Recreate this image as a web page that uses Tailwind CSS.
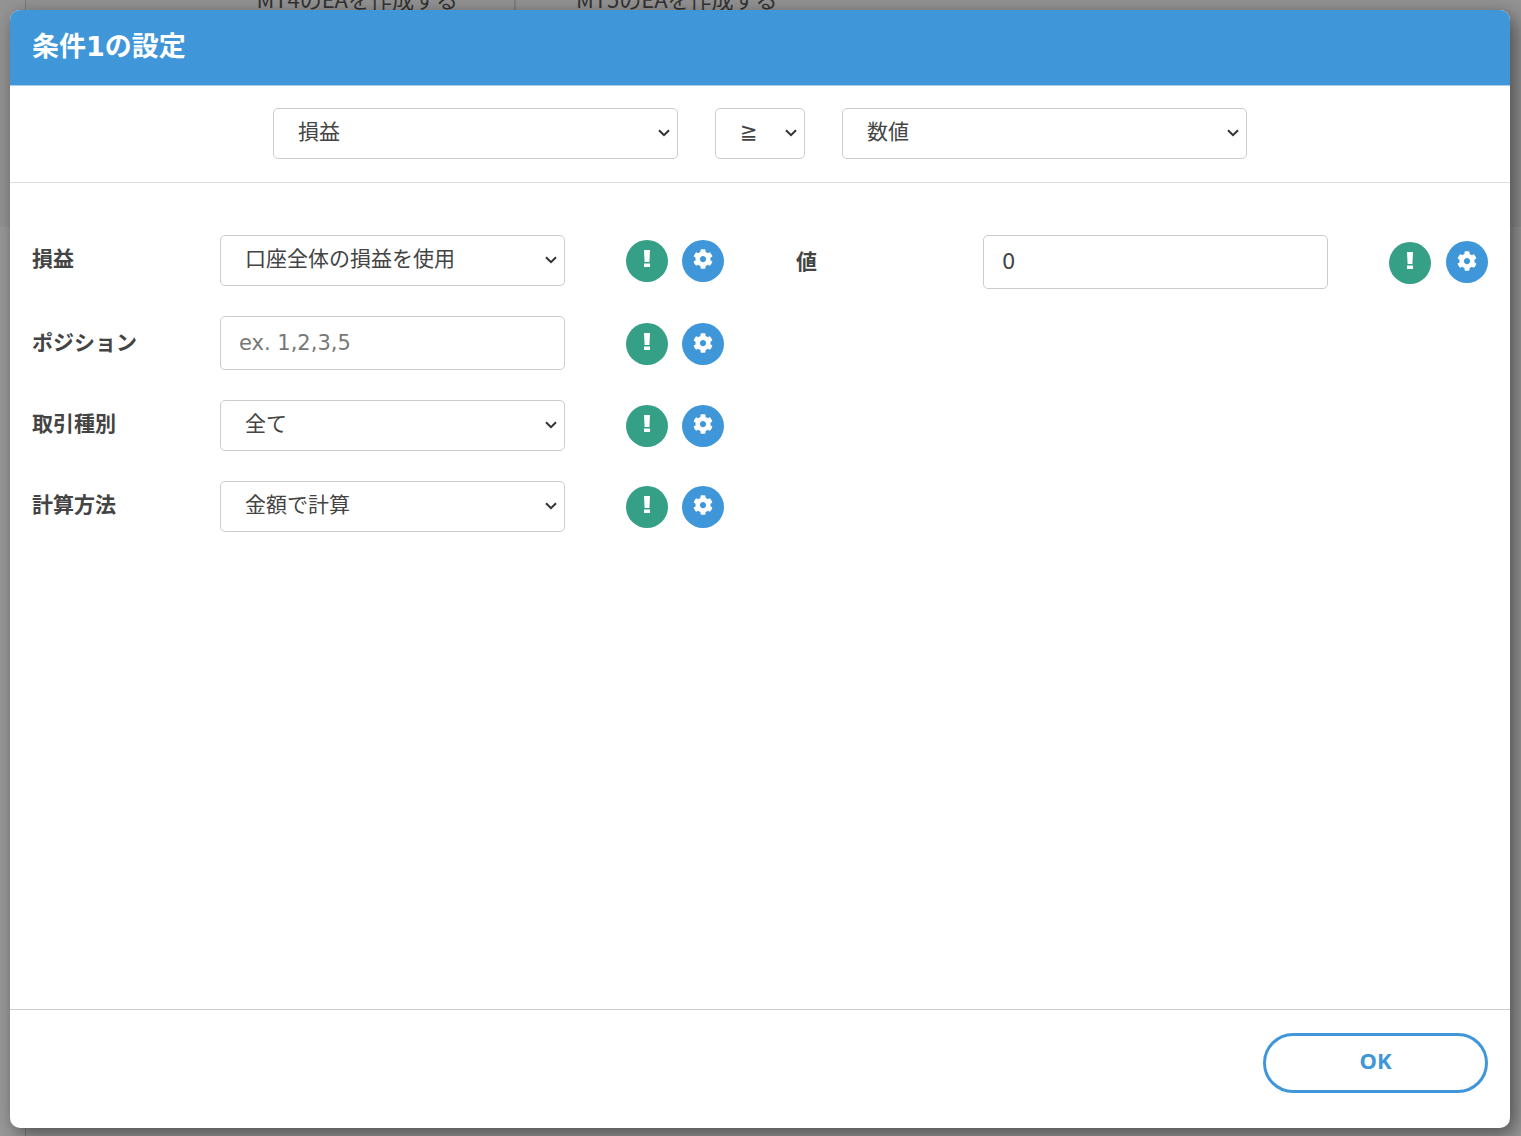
<!DOCTYPE html>
<html lang="ja">

<head>
    <meta charset="UTF-8">
    <meta name="viewport" content="width=device-width, initial-scale=1.0">
    <title>条件1の設定</title>
    <script src="https://cdn.jsdelivr.net/npm/@tailwindcss/browser@4"></script>
</head>

<body class="relative h-screen overflow-hidden bg-[#9a9a9a] font-['DejaVu_Sans','Noto_Sans_CJK_JP',sans-serif] text-[#444444]">

    <!-- Shared icons -->
    <svg class="hidden">
        <symbol id="chevron" viewBox="0 0 12 8"><path d="M1 1.2l5 5 5-5" fill="none" stroke="#333333" stroke-width="2"/></symbol>
        <symbol id="bang" viewBox="0 0 6 17"><path d="M0 0h6l-.6 12H.6z" fill="white"/><rect y="13.5" width="6" height="3.5" fill="white"/></symbol>
        <symbol id="cog" viewBox="0 0 512 512"><path fill="white" d="M487.4 315.7l-42.6-24.6c4.3-23.2 4.3-47 0-70.2l42.6-24.6c4.9-2.8 7.1-8.6 5.5-14-11.1-35.6-30-67.8-54.7-94.6-3.8-4.1-10-5.1-14.8-2.3L380.8 110c-17.9-15.4-38.5-27.3-60.8-35.1V25.8c0-5.6-3.9-10.5-9.4-11.7-36.7-8.2-74.3-7.8-109.2 0-5.5 1.2-9.4 6.1-9.4 11.7V75c-22.2 7.9-42.8 19.8-60.8 35.1L88.7 85.5c-4.9-2.8-11-1.9-14.8 2.3-24.7 26.7-43.6 58.9-54.7 94.6-1.7 5.4.6 11.2 5.5 14L67.3 221c-4.3 23.2-4.3 47 0 70.2l-42.6 24.6c-4.9 2.8-7.1 8.6-5.5 14 11.1 35.6 30 67.8 54.7 94.6 3.8 4.1 10 5.1 14.8 2.3l42.6-24.6c17.9 15.4 38.5 27.3 60.8 35.1v49.2c0 5.6 3.9 10.5 9.4 11.7 36.7 8.2 74.3 7.8 109.2 0 5.5-1.2 9.4-6.1 9.4-11.7v-49.2c22.2-7.9 42.8-19.8 60.8-35.1l42.6 24.6c4.9 2.8 11 1.9 14.8-2.3 24.7-26.7 43.6-58.9 54.7-94.6 1.5-5.5-.7-11.3-5.6-14.1zM256 336c-44.1 0-80-35.9-80-80s35.9-80 80-80 80 35.9 80 80-35.9 80-80 80z"/></symbol>
    </svg>

    <!-- Page behind the overlay -->
    <div class="absolute inset-x-0 top-0 h-[227px] bg-[#949494]"></div>
    <div class="absolute top-0 left-[25px] h-full border-l border-[#7c7c7c]"></div>
    <div class="absolute top-[-18px] left-[26px] flex h-[32px] font-['Noto_Sans_CJK_JP',sans-serif] text-[22px] text-[#333333]">
        <div class="w-[490px] border-r-2 border-[#808080] pr-[56px] text-right">MT4のEAを作成する</div>
        <div class="w-[322px] whitespace-nowrap pl-[60px]">MT5のEAを作成する</div>
    </div>

    <!-- Modal -->
    <div class="relative ml-[10px] mt-[10px] flex h-[1118px] w-[1500px] flex-col rounded-[10px] bg-white shadow-[5px_6px_20px_rgba(0,0,0,0.5)]">

        <!-- Header -->
        <div class="flex h-[76px] items-center rounded-t-[10px] border-b border-[#a9cfec] bg-[#3f96d9] px-[22px]">
            <h1 class="text-[27px] font-bold text-white">条件1の設定</h1>
        </div>

        <!-- Condition selects -->
        <div class="flex h-[97px] items-start justify-center gap-[37px] border-b border-[#dddddd] pt-[22px]">
            <div class="relative w-[405px]">
                <select class="h-[51px] w-full appearance-none rounded-[5px] border border-[#cccccc] bg-white pb-[2px] pl-[24px] text-[21px]"><option>損益</option></select>
                <svg class="pointer-events-none absolute right-[8px] top-[21px] h-[8px] w-[12px]"><use href="#chevron"/></svg>
            </div>
            <div class="relative w-[90px]">
                <select class="h-[51px] w-full appearance-none rounded-[5px] border border-[#cccccc] bg-white pb-[2px] pl-[24px] text-[21px]"><option>≧</option></select>
                <svg class="pointer-events-none absolute right-[8px] top-[21px] h-[8px] w-[12px]"><use href="#chevron"/></svg>
            </div>
            <div class="relative w-[405px]">
                <select class="h-[51px] w-full appearance-none rounded-[5px] border border-[#cccccc] bg-white pb-[2px] pl-[24px] text-[21px]"><option>数値</option></select>
                <svg class="pointer-events-none absolute right-[8px] top-[21px] h-[8px] w-[12px]"><use href="#chevron"/></svg>
            </div>
        </div>

        <!-- Settings -->
        <div class="flex flex-1 px-[22px] pt-[52px]">

            <div class="flex w-[692px] flex-col gap-[30px]">
                <div class="flex items-center">
                    <label class="w-[188px] pb-[2px] text-[21px] font-bold">損益</label>
                    <div class="relative w-[345px]">
                        <select class="h-[51px] w-full appearance-none rounded-[5px] border border-[#cccccc] bg-white pb-[2px] pl-[24px] text-[21px]"><option>口座全体の損益を使用</option></select>
                        <svg class="pointer-events-none absolute right-[8px] top-[21px] h-[8px] w-[12px]"><use href="#chevron"/></svg>
                    </div>
                    <div class="ml-[61px] flex items-center gap-[14px]">
                        <button class="flex size-[42px] items-center justify-center rounded-full bg-[#35a085] pb-[5px]"><svg class="h-[17px] w-[6px]"><use href="#bang"/></svg></button>
                        <button class="flex size-[42px] items-center justify-center rounded-full bg-[#3f96d9] pb-[3px]"><svg class="size-[20px]"><use href="#cog"/></svg></button>
                    </div>
                </div>
                <div class="flex items-center">
                    <label class="w-[188px] pt-[2px] text-[21px] font-bold">ポジション</label>
                    <input type="text" placeholder="ex. 1,2,3,5" class="h-[54px] w-[345px] rounded-[5px] border border-[#cccccc] bg-white pl-[18px] text-[21px] placeholder:text-[#777777]">
                    <div class="ml-[61px] mt-[2px] flex items-center gap-[14px]">
                        <button class="flex size-[42px] items-center justify-center rounded-full bg-[#35a085] pb-[5px]"><svg class="h-[17px] w-[6px]"><use href="#bang"/></svg></button>
                        <button class="flex size-[42px] items-center justify-center rounded-full bg-[#3f96d9] pb-[3px]"><svg class="size-[20px]"><use href="#cog"/></svg></button>
                    </div>
                </div>
                <div class="flex items-center">
                    <label class="w-[188px] pb-[2px] text-[21px] font-bold">取引種別</label>
                    <div class="relative w-[345px]">
                        <select class="h-[51px] w-full appearance-none rounded-[5px] border border-[#cccccc] bg-white pb-[2px] pl-[24px] text-[21px]"><option>全て</option></select>
                        <svg class="pointer-events-none absolute right-[8px] top-[21px] h-[8px] w-[12px]"><use href="#chevron"/></svg>
                    </div>
                    <div class="ml-[61px] flex items-center gap-[14px]">
                        <button class="flex size-[42px] items-center justify-center rounded-full bg-[#35a085] pb-[5px]"><svg class="h-[17px] w-[6px]"><use href="#bang"/></svg></button>
                        <button class="flex size-[42px] items-center justify-center rounded-full bg-[#3f96d9] pb-[3px]"><svg class="size-[20px]"><use href="#cog"/></svg></button>
                    </div>
                </div>
                <div class="flex items-center">
                    <label class="w-[188px] pb-[2px] text-[21px] font-bold">計算方法</label>
                    <div class="relative w-[345px]">
                        <select class="h-[51px] w-full appearance-none rounded-[5px] border border-[#cccccc] bg-white pb-[2px] pl-[24px] text-[21px]"><option>金額で計算</option></select>
                        <svg class="pointer-events-none absolute right-[8px] top-[21px] h-[8px] w-[12px]"><use href="#chevron"/></svg>
                    </div>
                    <div class="ml-[61px] flex items-center gap-[14px]">
                        <button class="flex size-[42px] items-center justify-center rounded-full bg-[#35a085] pb-[5px]"><svg class="h-[17px] w-[6px]"><use href="#bang"/></svg></button>
                        <button class="flex size-[42px] items-center justify-center rounded-full bg-[#3f96d9] pb-[3px]"><svg class="size-[20px]"><use href="#cog"/></svg></button>
                    </div>
                </div>
            </div>

            <div class="ml-[72px] flex h-[54px] items-center">
                <label class="w-[187px] pt-[2px] text-[21px] font-bold">値</label>
                <input type="text" value="0" class="h-[54px] w-[345px] rounded-[5px] border border-[#cccccc] bg-white pl-[18px] text-[21px]">
                <div class="ml-[61px] flex items-center gap-[15px]">
                    <button class="mt-[2px] flex size-[42px] items-center justify-center rounded-full bg-[#35a085] pb-[5px]"><svg class="h-[17px] w-[6px]"><use href="#bang"/></svg></button>
                    <button class="flex size-[42px] items-center justify-center rounded-full bg-[#3f96d9] pb-[3px]"><svg class="size-[20px]"><use href="#cog"/></svg></button>
                </div>
            </div>
        </div>

        <!-- Footer -->
        <div class="flex h-[119px] items-start justify-end border-t border-[#cccccc] px-[22px] pt-[23px]">
            <button class="h-[60px] w-[225px] rounded-full border-[3px] border-[#3f96d9] pb-[6px] font-['Noto_Sans',sans-serif] text-[22px] font-bold text-[#3f96d9]">OK</button>
        </div>
    </div>

</body>

</html>
